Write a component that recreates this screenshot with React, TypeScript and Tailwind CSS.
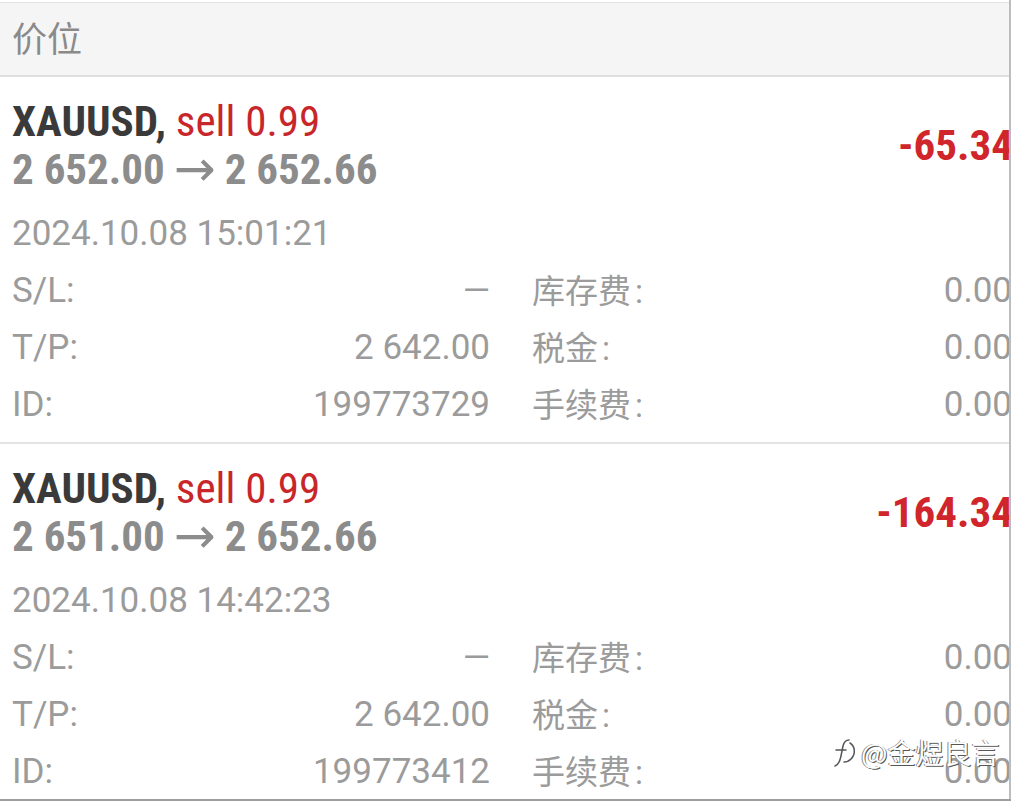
import React from "react";

type Trade = {
  symbol: string;
  side: string;
  open: string;
  current: string;
  profit: string;
  time: string;
  sl: string;
  tp: string;
  id: string;
};

const trades: Trade[] = [
  {
    symbol: "XAUUSD,",
    side: "sell 0.99",
    open: "2 652.00",
    current: "2 652.66",
    profit: "-65.34",
    time: "2024.10.08 15:01:21",
    sl: "—",
    tp: "2 642.00",
    id: "199773729",
  },
  {
    symbol: "XAUUSD,",
    side: "sell 0.99",
    open: "2 651.00",
    current: "2 652.66",
    profit: "-164.34",
    time: "2024.10.08 14:42:23",
    sl: "—",
    tp: "2 642.00",
    id: "199773412",
  },
];

const cond = "font-['Roboto_Condensed','Roboto',sans-serif] [font-stretch:75%]";

const Row = ({ l1, v1, l2, v2 }: { l1: string; v1: string; l2: string; v2: string }) => (
  <div className="flex h-[57px] items-center text-[35px] text-[#9b9b9b]">
    <div className="flex w-[478px] justify-between">
      <span>{l1}</span>
      <span>{v1}</span>
    </div>
    <div className="ml-[42px] flex flex-1 justify-between">
      <span className="font-['Noto_Sans_CJK_SC',sans-serif] text-[33px]">
        {l2}
        <span className="ml-1 font-['Roboto',sans-serif]">:</span>
      </span>
      <span className="-mr-[1px]">{v2}</span>
    </div>
  </div>
);

const TradeCard = ({ t }: { t: Trade }) => (
  <div className="border-b-2 border-[#e4e4e4] pl-3 pt-5 pb-2">
    <div className="flex items-center justify-between">
      <div className={cond}>
        <div className="h-12 text-[43px] leading-[48px]">
          <span className="font-bold text-[#3a3a3a]">{t.symbol}</span>{" "}
          <span className="text-[#c8262b]">{t.side}</span>
        </div>
        <div className="flex h-12 items-center text-[43px] font-bold leading-[48px] text-[#8c8c8c]">
          <span>{t.open}</span>
          <span className="mx-[9px] font-['DejaVu_Sans',sans-serif] text-[50px] font-normal [font-stretch:100%]">→</span>
          <span>{t.current}</span>
        </div>
      </div>
      <div className={`${cond} -mr-[2px] text-[43px] font-bold text-[#d0262b]`}>{t.profit}</div>
    </div>
    <div className="mt-[13px] flex h-[57px] items-center text-[35px] text-[#9b9b9b]">{t.time}</div>
    <Row l1="S/L:" v1={t.sl} l2="库存费" v2="0.00" />
    <Row l1="T/P:" v1={t.tp} l2="税金" v2="0.00" />
    <Row l1="ID:" v1={t.id} l2="手续费" v2="0.00" />
  </div>
);

export default function App() {
  return (
    <div className="relative h-[801px] w-[1011px] overflow-hidden bg-white font-['Roboto',sans-serif]">
      <div className="mt-[2px] border-t border-[#e2e2e2]">
        <div className="flex h-[74px] items-center border-b-2 border-[#e0e0e0] bg-[#f5f5f5] pl-3 pb-1 font-['Noto_Sans_CJK_SC',sans-serif] text-[35px] text-[#8a8a8a]">
          价位
        </div>
        {trades.map((t) => (
          <TradeCard key={t.id} t={t} />
        ))}
      </div>

      {/* watermark */}
      <div className="absolute left-[831px] top-[734px] flex items-center gap-[2px] whitespace-nowrap font-['Noto_Sans_CJK_SC',sans-serif] text-[28px] leading-[36px] text-white [text-shadow:-1px_0_0_#888,1px_1px_0_#555]">
        <svg width="28" height="34" viewBox="0 0 28 34" fill="none" stroke="#555" strokeWidth="1.5" strokeLinecap="round">
          <path d="M4 31c3-1 5-5 6-10l2-10c1-4 3-6 6-6" />
          <path d="M5 15h10" />
          <path d="M19 8c5 3 6 11 1 16c-2 2-5 3-7 3" />
        </svg>
        <span>@金煜良言</span>
      </div>

      <div className="absolute right-0 top-0 h-full w-[2px] bg-[#bdbdbd]" />
      <div className="absolute bottom-0 left-0 h-[2px] w-full bg-[#9e9e9e]" />
    </div>
  );
}
